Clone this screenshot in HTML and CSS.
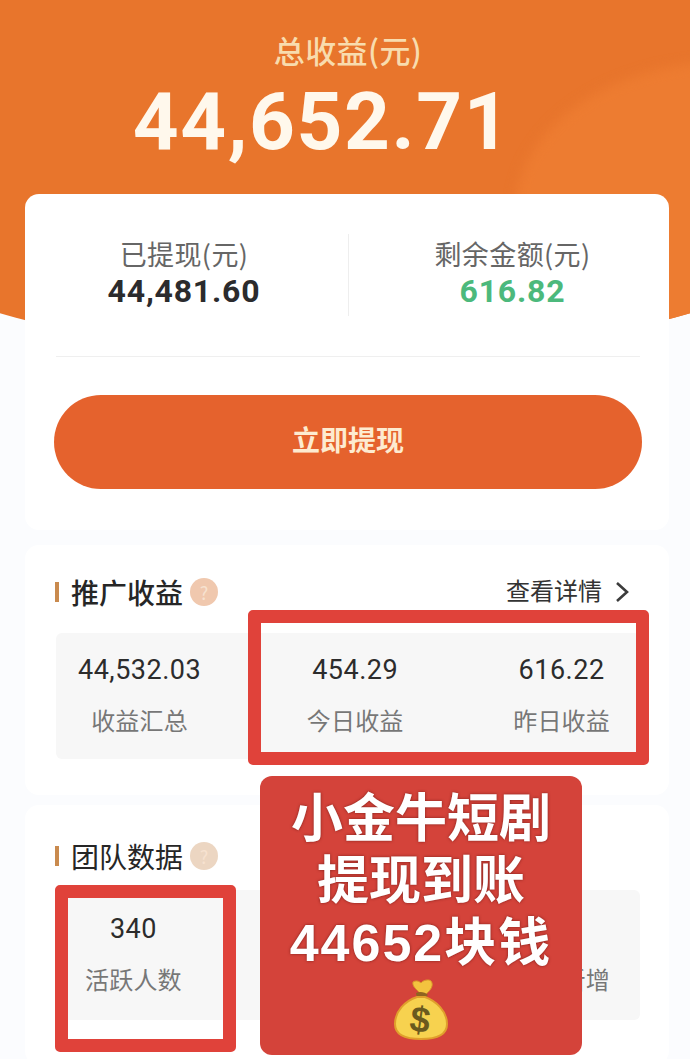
FILE: index.html
```html
<!DOCTYPE html>
<html lang="zh-CN">
<head>
<meta charset="utf-8">
<title>总收益</title>
<link rel="stylesheet" href="styles.css">
</head>
<body>
<main class="page">
  <header class="hero">
    <div class="hero-blob"></div>
    <div class="hero-label">总收益(元)</div>
    <div class="hero-amount">44,652.71</div>
  </header>

  <section class="card card-balance">
    <div class="balance-row">
      <div class="balance-col balance-left">
        <div class="balance-label">已提现(元)</div>
        <div class="balance-value">44,481.60</div>
      </div>
      <div class="balance-divider"></div>
      <div class="balance-col balance-right">
        <div class="balance-label">剩余金额(元)</div>
        <div class="balance-value balance-green">616.82</div>
      </div>
    </div>
    <div class="balance-rule"></div>
    <button class="withdraw">立即提现</button>
  </section>

  <section class="card card-promo">
    <div class="section-head">
      <span class="section-bar"></span>
      <h2 class="section-title">推广收益</h2>
      <span class="help">?</span>
      <a class="details"><span class="details-text">查看详情</span>
        <svg class="chevron" viewBox="0 0 14 22" width="14" height="22"><path d="M2 2l10 9-10 9" fill="none" stroke="#3c3c3c" stroke-width="2.6"/></svg>
      </a>
    </div>
    <div class="panel panel-promo">
      <div class="stat"><div class="stat-value">44,532.03</div><div class="stat-label">收益汇总</div></div>
      <div class="stat stat-mid"><div class="stat-value">454.29</div><div class="stat-label">今日收益</div></div>
      <div class="stat"><div class="stat-value">616.22</div><div class="stat-label">昨日收益</div></div>
    </div>
  </section>

  <section class="card card-team">
    <div class="section-head">
      <span class="section-bar"></span>
      <h2 class="section-title title-light">团队数据</h2>
      <span class="help help-muted">?</span>
    </div>
    <div class="panel panel-team">
      <div class="stat"><div class="stat-value">340</div><div class="stat-label">活跃人数</div></div>
      <div class="stat"><div class="stat-label label-spaced">今日新增</div></div>
    </div>
  </section>

  <div class="frame frame-income"></div>
  <div class="frame frame-team"></div>

  <aside class="sticker">
    <p class="sticker-line">小金牛短剧</p>
    <p class="sticker-line">提现到账</p>
    <p class="sticker-line sticker-amount">44652块钱</p>
    <svg class="bag" viewBox="0 0 56 62" width="56" height="62">
      <path d="M27 14C23 10 19 7 20 3c3-2 6-1 8 1 2-3 8-4 10-2 3 4 0 9-5 13z" fill="#f3c33f" stroke="#d99a2a" stroke-width="1"/>
      <path d="M23 14c4-2 9-1 12 2l-3 3h-8z" fill="#8f6420"/>
      <path d="M24 18C12 22 2 32 2 45c0 11 10 15 26 15s26-4 26-15C54 32 43 22 32 18z" fill="#f7d24f" stroke="#e09f2c" stroke-width="2"/>
      <text class="bag-sign" x="27" y="53" text-anchor="middle" transform="rotate(8 27 42)">$</text>
    </svg>
  </aside>
</main>
</body>
</html>
```
FILE: styles.css
```css
* { box-sizing: border-box; }
html, body { margin: 0; padding: 0; }
body {
  background: #fbfcfe;
  font-family: "Noto Sans CJK SC", "Noto Sans", sans-serif;
  color: #2b2b2b;
}
.page {
  position: relative;
  width: 690px;
  height: 1059px;
  overflow: hidden;
}

/* hero */
.hero {
  position: relative;
  height: 345px;
  padding-top: 29px;
  background: #e8752c;
  clip-path: ellipse(700px 360px at 50% 0);
  overflow: hidden;
  text-align: center;
}
.hero-blob {
  position: absolute;
  left: 515px;
  top: 62px;
  width: 420px;
  height: 300px;
  border-radius: 50%;
  background: #ed7c31;
  filter: blur(6px);
}
.hero-label {
  position: relative;
  height: 42px;
  padding-left: 6px;
  font-size: 31px;
  line-height: 42px;
  font-weight: 500;
  letter-spacing: 0.4px;
  color: #f8dcae;
}
.hero-amount {
  position: relative;
  margin-top: 11px;
  padding-right: 46px;
  font-family: Roboto, "Liberation Sans", sans-serif;
  font-size: 80px;
  line-height: 80px;
  font-weight: 700;
  letter-spacing: 1.6px;
  color: #fff8ec;
}

/* cards */
.card {
  position: relative;
  width: 644px;
  margin-left: 25px;
  background: #fff;
  border-radius: 14px;
}
.card-balance {
  height: 336px;
  margin-top: -151px;
  padding: 40px 29px 0 31px;
}
.card-promo {
  height: 250px;
  margin-top: 15px;
  padding: 27px 29px 0 31px;
}
.card-team {
  height: 260px;
  margin-top: 10px;
  padding: 31px 29px 0 31px;
}

/* balance */
.balance-row {
  display: grid;
  grid-template-columns: 292px 1px 1fr;
  height: 82px;
}
.balance-col { text-align: center; }
.balance-left { padding-right: 36px; }
.balance-right { padding-left: 36px; }
.balance-divider { background: #eeeeee; }
.balance-label {
  height: 40px;
  font-size: 27px;
  line-height: 40px;
  letter-spacing: 0.4px;
  color: #666;
}
.balance-value {
  font-family: Roboto, "Liberation Sans", sans-serif;
  font-size: 32px;
  line-height: 34px;
  font-weight: 700;
  letter-spacing: 0.8px;
  color: #2b2b2d;
}
.balance-green { color: #4cb97c; }
.balance-rule {
  height: 1px;
  margin-top: 40px;
  background: #efefef;
}
.withdraw {
  display: block;
  width: 588px;
  height: 94px;
  margin: 38px 0 0 -2px;
  padding: 0 0 6px;
  border: 0;
  border-radius: 47px;
  background: #e5622d;
  color: #fdebd0;
  font-family: inherit;
  font-size: 28px;
  font-weight: 700;
}

/* section header */
.section-head {
  display: flex;
  align-items: center;
  height: 40px;
}
.section-bar {
  width: 4px;
  height: 20px;
  margin-left: -1px;
  background: #c98a4e;
}
.section-title {
  margin: 0 0 0 12px;
  font-size: 28px;
  line-height: 40px;
  font-weight: 500;
  color: #262626;
}
.title-light { font-weight: 400; }
.help {
  width: 28px;
  height: 28px;
  margin-left: 7px;
  border-radius: 50%;
  background: #f0c8ae;
  color: #f7e2d0;
  font-size: 18px;
  line-height: 28px;
  text-align: center;
}
.help-muted { background: #ecd6c2; }
.details {
  display: flex;
  align-items: center;
  gap: 13px;
  margin-left: auto;
  margin-right: 11px;
  font-size: 24px;
  line-height: 36px;
  color: #333;
}
.details-text { margin-bottom: 4px; }

/* stats */
.panel {
  display: flex;
  justify-content: space-between;
  width: 584px;
  background: #f7f7f7;
  border-radius: 6px;
}
.panel-promo {
  height: 126px;
  margin-top: 21px;
  padding: 16px 30px 0 22px;
}
.panel-team {
  height: 130px;
  margin-top: 14px;
  padding: 18px 30px 0 29px;
}
.stat { text-align: center; }
.stat-mid { margin-left: -4px; }
.stat-value {
  height: 42px;
  font-family: Roboto, "Liberation Sans", sans-serif;
  font-size: 27px;
  line-height: 42px;
  letter-spacing: 0.5px;
  color: #2c2c2c;
}
.stat-label {
  margin-top: 11px;
  font-size: 24px;
  line-height: 36px;
  letter-spacing: 0.2px;
  color: #777;
}
.label-spaced { margin-top: 53px; }

/* annotations laid over the screenshot */
.frame {
  position: absolute;
  border: 13px solid #e0423a;
  border-radius: 5px;
}
.frame-income {
  left: 248px;
  top: 610px;
  width: 401px;
  height: 155px;
}
.frame-team {
  left: 55px;
  top: 885px;
  width: 181px;
  height: 167px;
}
.sticker {
  position: absolute;
  left: 260px;
  top: 776px;
  display: flex;
  flex-direction: column;
  align-items: center;
  width: 322px;
  height: 279px;
  padding-top: 12px;
  background: #d4433a;
  border-radius: 12px;
}
.sticker-line {
  margin: 0;
  height: 62px;
  font-family: "Liberation Sans", "Noto Sans CJK SC", sans-serif;
  font-size: 52px;
  line-height: 62px;
  font-weight: 700;
  color: #fff;
  white-space: nowrap;
  text-shadow: 0 0 3px #7c1f1a;
}
.sticker-amount { letter-spacing: 2px; }
.bag { margin-top: 5px; }
.bag-sign {
  font-family: "Liberation Sans", sans-serif;
  font-size: 36px;
  font-weight: 700;
  fill: #6b5a1e;
}
```
